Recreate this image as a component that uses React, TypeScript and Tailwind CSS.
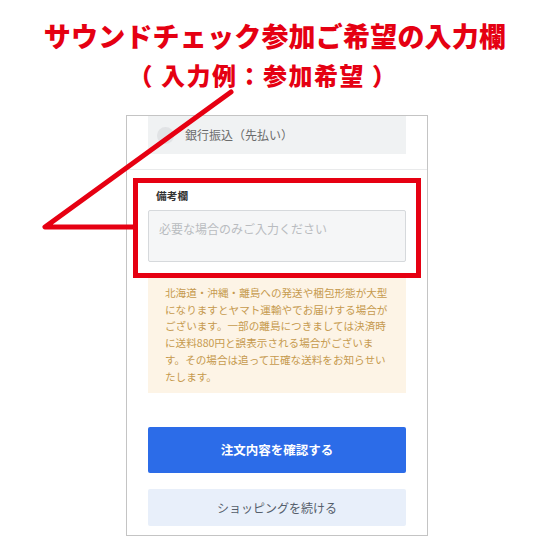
import React from "react";

const noteLines = [
  "北海道・沖縄・離島への発送や梱包形態が大型",
  "になりますとヤマト運輸やでお届けする場合が",
  "ございます。一部の離島につきましては決済時",
  "に送料880円と誤表示される場合がございま",
  "す。その場合は追って正確な送料をお知らせい",
  "たします。",
];

const jp = { fontFamily: '"Noto Sans CJK JP", "Noto Sans", sans-serif' };

const App = () => {
  return (
    <div className="relative w-[550px] h-[550px] bg-white overflow-hidden" style={jp}>
      {/* Heading */}
      <div className="pt-[20px] flex flex-col items-center text-[#e50012] font-black">
        <h1 className="text-[27px] leading-[32px] tracking-[0.2px]">
          サウンドチェック参加ご希望の入力欄
        </h1>
        <p className="mt-[9px] pr-[24px] text-[24px] leading-[28px] tracking-[1.5px]">
          （ 入力例：参加希望 ）
        </p>
      </div>

      {/* Phone screen */}
      <div className="ml-[126px] mt-[26px] w-[302px] h-[421px] border border-[#c4c4c4] flex flex-col">
        <div className="px-[21px]">
          <div className="h-[38px] bg-[#f0f2f3] flex items-center pl-[9px] gap-[11px]">
            <span className="w-[17px] h-[17px] rounded-full bg-[#e1e3e5]" />
            <span className="text-[12px] text-[#6b6b6b]">銀行振込（先払い）</span>
          </div>
        </div>
        <div className="mt-[15px] border-t border-[#e9eaeb]" />

        <div className="px-[21px] pt-[19px] flex flex-col">
          <label className="pl-[8px] text-[10.7px] leading-[14px] font-bold text-[#333]">備考欄</label>
          <div className="mt-[7px] h-[52px] bg-[#f5f6f7] border border-[#d6d9dc] rounded-[2px] px-[10px] pt-[9px] text-[12px] text-[#b9bcc0]">
            必要な場合のみご入力ください
          </div>

          <div className="mt-[11px] h-[120px] bg-[#fdf4e6] pl-[17px] pt-[12px] text-[10.6px] leading-[16.7px] text-[#c69a4e]">
            {noteLines.map((line, i) => (
              <div key={i} className="whitespace-nowrap">
                {line}
              </div>
            ))}
          </div>

          <button className="mt-[34px] h-[46px] bg-[#2c6ce8] rounded-[2px] text-white text-[12.5px] font-bold">
            注文内容を確認する
          </button>
          <button className="mt-[16px] h-[37px] bg-[#e8effa] rounded-[2px] text-[#555e6b] text-[12px]">
            ショッピングを続ける
          </button>
        </div>
      </div>

      {/* Annotation */}
      <svg className="absolute top-0 left-0 pointer-events-none" width="550" height="550" viewBox="0 0 550 550">
        <polyline
          points="231,92 45,227 135,227"
          fill="none"
          stroke="#e60012"
          strokeWidth="5"
          strokeLinecap="round"
          strokeLinejoin="round"
        />
        <rect x="135.5" y="180.5" width="283" height="95" fill="none" stroke="#e60012" strokeWidth="5" />
      </svg>
    </div>
  );
};

export default App;
